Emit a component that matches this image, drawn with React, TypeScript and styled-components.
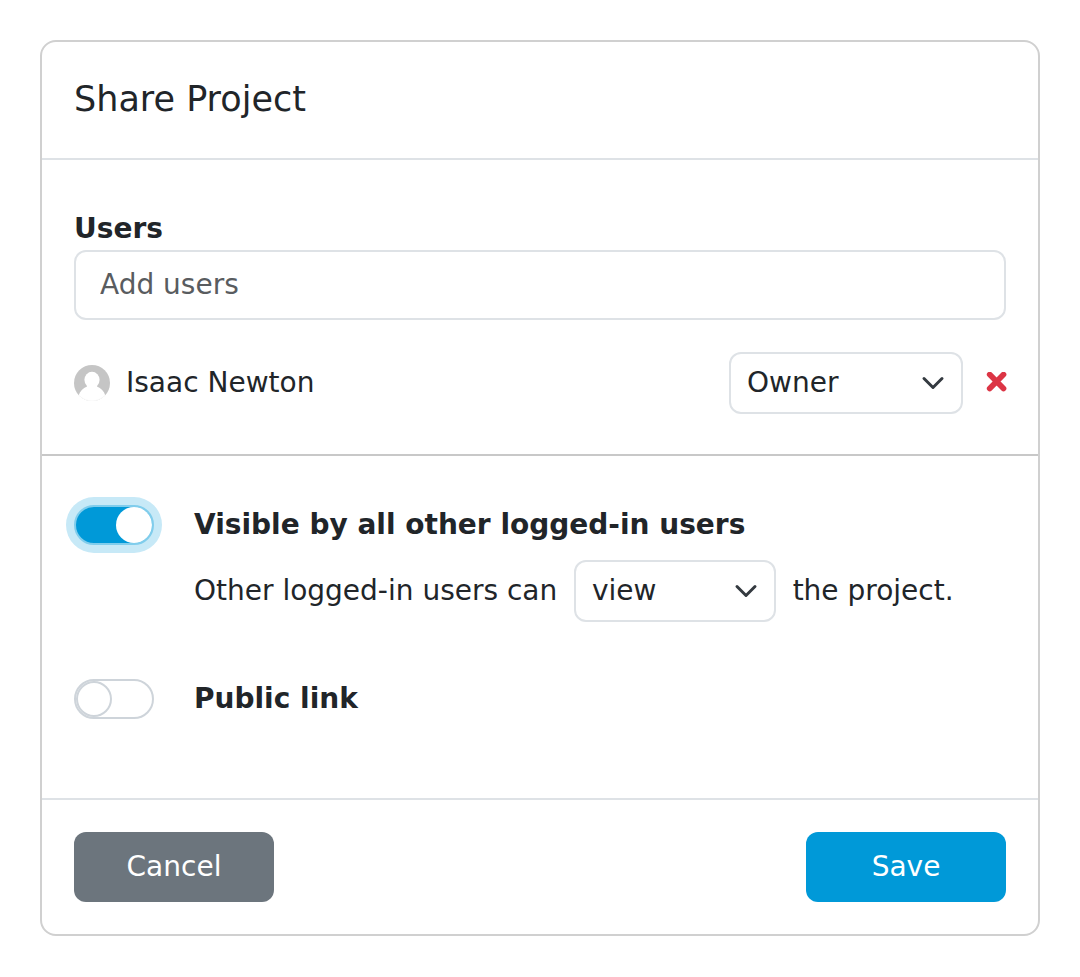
import React from "react";
import styled, { createGlobalStyle } from "styled-components";

const Global = createGlobalStyle`
  *, *::before, *::after { box-sizing: border-box; }
  body {
    margin: 0;
    background: #fff;
    color: #212529;
    font: 28px/42px "DejaVu Sans", sans-serif;
  }
`;

const Dialog = styled.section`
  width: 1000px;
  height: 896px;
  margin: 40px;
  display: flex;
  flex-direction: column;
  border: 2px solid #d0d0d0;
  border-radius: 16px;
`;

const Header = styled.header`
  height: 118px;
  flex: none;
  padding: 31px 32px 0;
  border-bottom: 2px solid #dee2e6;
`;

const Title = styled.h1`
  margin: 0;
  font-size: 35px;
  line-height: 52px;
  font-weight: 400;
`;

const Users = styled.div`
  height: 296px;
  flex: none;
  padding: 48px 32px 0;
  border-bottom: 2px solid #c8c8c8;
`;

const Label = styled.label`
  display: block;
  font-weight: 700;
`;

const Input = styled.input`
  display: block;
  width: 100%;
  height: 70px;
  padding: 0 24px 2px;
  border: 2px solid #dee2e6;
  border-radius: 12px;
  font: inherit;
  color: inherit;
  &::placeholder { color: #595c5f; opacity: 1; }
`;

const UserRow = styled.div`
  display: flex;
  align-items: center;
  height: 62px;
  margin: 32px -2px 0 0;
`;

const UserName = styled.span`
  flex: 1;
  margin-left: 16px;
`;

const SelectBox = styled.button<{ $width: number }>`
  display: flex;
  align-items: center;
  justify-content: space-between;
  width: ${(p) => p.$width}px;
  height: 62px;
  padding: 0 16px;
  background: #fff;
  border: 2px solid #dee2e6;
  border-radius: 12px;
  font: inherit;
  color: inherit;
`;

const Remove = styled.svg`
  margin-left: 23px;
`;

const Options = styled.div`
  flex: 1;
  padding: 48px 32px 0;
`;

const Option = styled.div`
  display: flex;
  align-items: center;
  height: 42px;
`;

const Toggle = styled.button<{ $on?: boolean }>`
  display: flex;
  align-items: center;
  justify-content: ${(p) => (p.$on ? "flex-end" : "flex-start")};
  width: 80px;
  height: 40px;
  margin-right: 40px;
  padding: 0;
  border: 2px solid ${(p) => (p.$on ? "#80cdec" : "#ced4da")};
  border-radius: 20px;
  background: ${(p) => (p.$on ? "#0099d8" : "#fff")};
  box-shadow: ${(p) => (p.$on ? "0 0 0 8px #c7e9f7" : "none")};
`;

const Knob = styled.span<{ $on?: boolean }>`
  width: 36px;
  height: 36px;
  border-radius: 50%;
  background: #fff;
  border: ${(p) => (p.$on ? "0" : "2px solid #ced4da")};
`;

const Permission = styled.div`
  display: flex;
  align-items: center;
  gap: 16.7px;
  margin: 14px 0 56px 120px;
`;

const Footer = styled.footer`
  display: flex;
  justify-content: space-between;
  height: 136px;
  flex: none;
  padding: 32px 32px 0;
  border-top: 2px solid #dee2e6;
`;

const Button = styled.button<{ $primary?: boolean }>`
  width: 200px;
  height: 70px;
  padding: 0;
  border: 0;
  border-radius: 12px;
  font: inherit;
  color: #fff;
  background: ${(p) => (p.$primary ? "#0099d8" : "#6c757d")};
`;

const Chevron = () => (
  <svg width="24" height="24" viewBox="0 0 16 16" fill="none" stroke="#343a40" strokeWidth="2" strokeLinecap="round" strokeLinejoin="round">
    <path d="m2 5 6 6 6-6" />
  </svg>
);

const Avatar = () => (
  <svg width="36" height="36" viewBox="0 0 36 36">
    <defs>
      <clipPath id="avatar"><circle cx="18" cy="18" r="18" /></clipPath>
    </defs>
    <g clipPath="url(#avatar)">
      <rect width="36" height="36" fill="#c5c5c5" />
      <ellipse cx="18" cy="14.8" rx="7.6" ry="8" fill="#fff" />
      <path d="M13 19h10v2.5c4 1.5 7 4.500 8.500 9.500L30 36H6l-1.500-5C6 26 9 23 13 21.500z" fill="#fff" />
      <path d="M4.500 30.200A18 18 0 0 0 31.500 30.200" fill="#fff" />
      <path d="M5.500 30.800A17.700 17.700 0 0 0 30.500 30.800" fill="none" stroke="#f4f4f4" strokeWidth="0.7" />
    </g>
  </svg>
);

export default function App() {
  return (
    <>
      <Global />
      <Dialog>
        <Header><Title>Share Project</Title></Header>
        <Users>
          <Label htmlFor="users">Users</Label>
          <Input id="users" placeholder="Add users" />
          <UserRow>
            <Avatar />
            <UserName>Isaac Newton</UserName>
            <SelectBox $width={234}>Owner<Chevron /></SelectBox>
            <Remove width="22" height="22" viewBox="0 0 22 22" stroke="#dc3545" strokeWidth="5.7" strokeLinecap="round">
              <path d="M3.700 2.600l13.800 13.800M17.500 2.600 3.700 16.400" />
            </Remove>
          </UserRow>
        </Users>
        <Options>
          <Option>
            <Toggle $on aria-label="Visible by all other logged-in users"><Knob $on /></Toggle>
            <Label as="span">Visible by all other logged-in users</Label>
          </Option>
          <Permission>
            <span>Other logged-in users can</span>
            <SelectBox $width={202}>view<Chevron /></SelectBox>
            <span>the project.</span>
          </Permission>
          <Option>
            <Toggle aria-label="Public link"><Knob /></Toggle>
            <Label as="span">Public link</Label>
          </Option>
        </Options>
        <Footer>
          <Button>Cancel</Button>
          <Button $primary>Save</Button>
        </Footer>
      </Dialog>
    </>
  );
}
